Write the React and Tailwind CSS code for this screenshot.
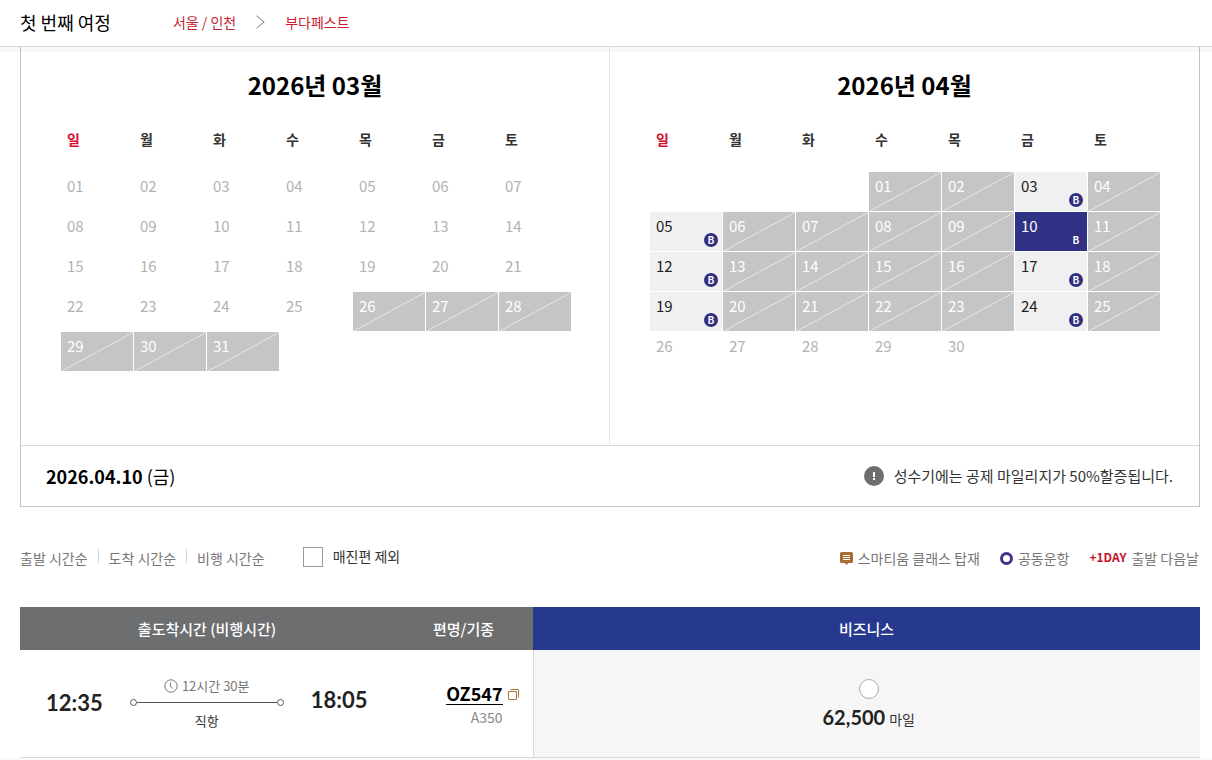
import React from "react";

const WEEKDAYS = ["일", "월", "화", "수", "목", "금", "토"];

const MONTHS = [
  {
    title: "2026년 03월",
    offset: 0,
    days: 31,
    soldOut: [26, 27, 28, 29, 30, 31],
    open: [],
    panel: "border-r border-[#e9e9e9]",
    inset: "pl-10 pr-[37px]",
  },
  {
    title: "2026년 04월",
    offset: 3,
    days: 30,
    soldOut: [1, 2, 4, 6, 7, 8, 9, 11, 13, 14, 15, 16, 18, 20, 21, 22, 23, 25],
    open: [3, 5, 10, 12, 17, 19, 24],
    selected: 10,
    panel: "",
    inset: "pl-10 pr-[38px]",
  },
];

function weeksOf({ offset, days }) {
  const cells = Array.from({ length: 35 }, (_, i) => {
    const d = i - offset + 1;
    return d > 0 && d <= days ? d : null;
  });
  return [0, 1, 2, 3, 4].map((w) => cells.slice(w * 7, w * 7 + 7));
}

function Day({ day, month }) {
  if (!day) return null;
  const label = String(day).padStart(2, "0");
  const base = "relative block h-[39px] w-full pl-1.5 pb-3 text-left text-[15px] leading-[27px]";
  if (month.soldOut.includes(day)) {
    return (
      <button type="button" disabled className={`${base} bg-[#c5c5c5] text-white`}>
        <svg className="absolute inset-0 h-full w-full" viewBox="0 0 72 39" preserveAspectRatio="none" aria-hidden="true">
          <path d="M1 39 72 0.5" stroke="#e6e6e6" strokeWidth="1" fill="none" />
        </svg>
        <span className="relative">{label}</span>
      </button>
    );
  }
  if (month.open.includes(day)) {
    const selected = month.selected === day;
    return (
      <button
        type="button"
        aria-pressed={selected}
        className={`${base} ${selected ? "bg-[#303285] text-white" : "bg-[#f0f0f0] text-[#222]"}`}
      >
        {label}
        <span className="absolute right-1 bottom-1 flex size-3.5 items-center justify-center rounded-full bg-[#322f80] font-[Noto_Sans_CJK_KR,sans-serif] text-[10px] leading-[14px] font-bold text-white">
          B
        </span>
      </button>
    );
  }
  return (
    <button type="button" disabled className={`${base} text-[#b2b2b2]`}>
      {label}
    </button>
  );
}

function Calendar({ month }) {
  return (
    <section className={`pt-5 pb-[73px] ${month.panel}`}>
      <h2 className="text-center text-2xl leading-9 font-bold text-black">{month.title}</h2>
      <div className={month.inset}>
        <table className="w-full table-fixed">
          <thead>
            <tr>
              {WEEKDAYS.map((d, i) => (
                <th
                  key={d}
                  scope="col"
                  className={`h-[69px] p-0 pt-0.5 pl-1.5 text-left text-sm font-bold ${i === 0 ? "text-[#d60f2c]" : "text-[#333]"}`}
                >
                  {d}
                </th>
              ))}
            </tr>
          </thead>
          <tbody>
            {weeksOf(month).map((week, w) => (
              <tr key={w}>
                {week.map((day, i) => (
                  <td key={i} className="h-10 p-0 pr-px pb-px align-top">
                    <Day day={day} month={month} />
                  </td>
                ))}
              </tr>
            ))}
          </tbody>
        </table>
      </div>
    </section>
  );
}

function SortBar() {
  return (
    <div className="my-10 flex h-5 items-center justify-between text-sm leading-5 text-[#777]">
      <div className="flex items-center">
        <div className="flex items-center pt-0.5">
          <button type="button" className="pr-2.5">출발 시간순</button>
          <span className="-mt-1 h-3.5 w-px bg-[#d5d5d5]" />
          <button type="button" className="px-2.5">도착 시간순</button>
          <span className="-mt-1 h-3.5 w-px bg-[#d5d5d5]" />
          <button type="button" className="pl-2.5">비행 시간순</button>
        </div>
        <label className="ml-[38px] flex items-center gap-2.5 text-[#333]">
          <input type="checkbox" className="size-5 appearance-none border border-[#999] bg-white" />
          <span className="pb-0.5">매진편 제외</span>
        </label>
      </div>
      <ul className="flex items-center gap-5 pt-0.5 pr-px">
        <li className="flex items-center gap-[5px]">
          <svg width="13" height="13" viewBox="0 0 13 13" aria-hidden="true">
            <path d="M1.5 0h10A1.5 1.5 0 0 1 13 1.5v8a1.5 1.5 0 0 1-1.5 1.5H8.3L6.5 13 4.7 11H1.5A1.5 1.5 0 0 1 0 9.500v-8A1.500 1.500 0 0 1 1.500 0z" fill="#a86f35" />
            <path d="M3 3.500h7M3 5.500h7M3 7.500h7" stroke="#fff" strokeWidth="1" />
          </svg>
          스마티움 클래스 탑재
        </li>
        <li className="flex items-center gap-[5px]">
          <span className="size-[13px] rounded-full border-[3px] border-[#45328a]" />
          공동운항
        </li>
        <li className="flex items-center gap-[5px]">
          <strong className="pb-0.5 text-xs leading-5 font-bold text-[#c8102e]">+1DAY</strong>
          출발 다음날
        </li>
      </ul>
    </div>
  );
}

function Duration() {
  return (
    <div className="flex w-[154px] flex-col items-center">
      <p className="flex items-center gap-1 text-[13px] leading-5 text-[#777]">
        <svg width="14" height="14" viewBox="0 0 14 14" fill="none" stroke="#777" aria-hidden="true">
          <circle cx="7" cy="7" r="6.200" />
          <path d="M6.500 3.500v4l2.200 1.700" />
        </svg>
        12시간 30분
      </p>
      <div className="mt-[3px] flex w-full items-center">
        <span className="size-[7px] rounded-full border border-[#555]" />
        <span className="h-px flex-1 bg-[#555]" />
        <span className="size-[7px] rounded-full border border-[#555]" />
      </div>
      <p className="mt-[5px] text-[13px] leading-5 text-[#333]">직항</p>
    </div>
  );
}

function Flights() {
  return (
    <table className="w-full table-fixed">
      <colgroup>
        <col className="w-[374px]" />
        <col className="w-[139px]" />
        <col />
      </colgroup>
      <thead>
        <tr className="h-[43px] text-[15px] leading-6 text-white">
          <th scope="col" className="bg-[#6d6e70] p-0 font-medium">출도착시간 (비행시간)</th>
          <th scope="col" className="bg-[#6d6e70] p-0 font-medium">편명/기종</th>
          <th scope="col" className="bg-[#27388f] p-0 font-medium">비즈니스</th>
        </tr>
      </thead>
      <tbody>
        <tr className="h-[107px] border-b border-[#d9d9d9]">
          <td className="p-0 pl-[26px]">
            <div className="flex items-center gap-[27px]">
              <time className="font-[Lato,sans-serif] text-[22px] leading-7 font-bold text-[#222]">12:35</time>
              <Duration />
              <time className="pb-1.5 font-[Lato,sans-serif] text-[22px] leading-7 font-bold text-[#222]">18:05</time>
            </div>
          </td>
          <td className="p-0 pt-1.5 pr-3.5">
            <div className="flex items-center justify-end gap-[5px]">
              <a href="#oz547" className="border-b border-black text-lg leading-[21px] font-bold text-black">OZ547</a>
              <svg width="11" height="11" viewBox="0 0 11 11" fill="none" stroke="#a8763e" aria-hidden="true">
                <path d="M.5 2.500h8v8h-8zM2.500 .5h8v8" />
              </svg>
            </div>
            <p className="pr-4 text-right text-sm leading-6 text-[#888]">A350</p>
          </td>
          <td className="border-l border-[#d9d9d9] bg-[#f6f6f6] p-0 pt-1.5 pl-1">
            <label className="flex flex-col items-center">
              <input type="radio" name="fare" className="size-5 appearance-none rounded-full border border-[#aaa] bg-white" />
              <span className="mt-1 flex items-baseline gap-1 text-sm leading-7 text-[#333]">
                <strong className="font-[Lato,sans-serif] text-xl leading-7 font-bold text-[#222]">62,500</strong>
                마일
              </span>
            </label>
          </td>
        </tr>
      </tbody>
    </table>
  );
}

export default function App() {
  return (
    <div className="min-h-screen bg-white font-[Noto_Sans_CJK_KR,sans-serif] text-[#333]">
      <header className="sticky top-0 z-10 flex h-[47px] items-center border-b border-[#d9d9d9] bg-white px-5 pb-0.5 shadow-[0_5px_0_rgba(0,0,0,0.03)]">
        <h1 className="text-lg leading-6 text-black">첫 번째 여정</h1>
        <p className="ml-[62px] flex items-center text-sm leading-5 text-[#c8202f]">
          서울 / 인천
          <svg className="mx-5" width="9" height="14" viewBox="0 0 9 14" fill="none" stroke="#777" aria-hidden="true">
            <path d="M.5.8 8.200 7 .5 13.200" />
          </svg>
          부다페스트
        </p>
      </header>
      <main className="px-5 pr-3">
        <div className="border-x border-b border-[#c5c5c5]">
          <div className="grid grid-cols-2">
            {MONTHS.map((m) => (
              <Calendar key={m.title} month={m} />
            ))}
          </div>
          <div className="flex h-[61px] items-center justify-between border-t border-[#d9d9d9] pr-[26px] pl-[25px]">
            <p className="text-lg leading-7 text-black">
              <strong className="font-bold">2026.04.10</strong> (금)
            </p>
            <p className="flex items-center gap-2.5 text-[15px] leading-6 text-[#333]">
              <svg width="20" height="20" viewBox="0 0 20 20" aria-hidden="true">
                <circle cx="10" cy="10" r="10" fill="#6e6e6e" />
                <path d="M9 6h2v5H9zM9 12h2v2H9z" fill="#fff" />
              </svg>
              성수기에는 공제 마일리지가 50%할증됩니다.
            </p>
          </div>
        </div>
        <SortBar />
        <Flights />
      </main>
      <div className="h-0.5 bg-[#f9f9f9]" />
    </div>
  );
}
